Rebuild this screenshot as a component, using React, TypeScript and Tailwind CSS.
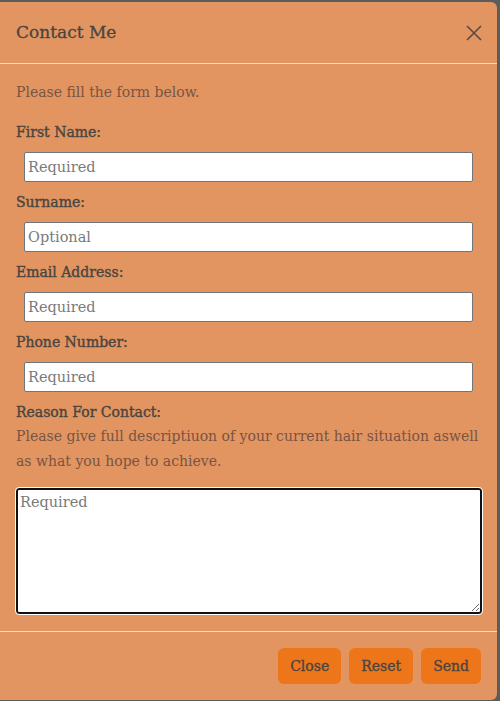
import React from "react";

const fields = [
  { label: "First Name:", placeholder: "Required" },
  { label: "Surname:", placeholder: "Optional" },
  { label: "Email Address:", placeholder: "Required" },
  { label: "Phone Number:", placeholder: "Required" },
];

export default function App() {
  return (
    <div
      className="h-[701px] w-[500px] bg-[#5c5c5c] pt-[2px] pr-[3px] overflow-hidden"
      style={{ fontFamily: '"DejaVu Serif", serif' }}
    >
      <div className="h-[698px] bg-[#e29561] rounded-r-md flex flex-col">
        {/* Header */}
        <div className="flex items-center justify-between px-4 h-[62px] border-b border-[#dee2e6]">
          <h2 className="text-[17px] text-[#4a4440] [-webkit-text-stroke:0.3px_#4a4440]">Contact Me</h2>
          <svg width="16" height="16" viewBox="0 0 16 16" className="mr-[-1px]">
            <path d="M1 1L15 15M15 1L1 15" stroke="#5a4a40" strokeWidth="1.6" />
          </svg>
        </div>

        {/* Body */}
        <div className="flex-1 px-4 pt-4 text-[14px] leading-6">
          <p className="text-[#785443] mb-4">Please fill the form below.</p>
          {fields.map((f) => (
            <div key={f.label}>
              <label className="block text-[#4b4540] [-webkit-text-stroke:0.4px_#4b4540] mb-2">{f.label}</label>
              <input
                className="block mx-2 mb-2 w-[449px] h-[30px] bg-white border border-[#6d757d] rounded-[2px] px-[3px] text-[14.5px] placeholder:text-[#7a7a7a] outline-none"
                placeholder={f.placeholder}
              />
            </div>
          ))}
          <label className="block text-[#4b4540] [-webkit-text-stroke:0.4px_#4b4540]">Reason For Contact:</label>
          <p className="text-[#785443] leading-[25px]">
            Please give full descriptiuon of your current hair situation aswell as what you hope to achieve.
          </p>
          <textarea
            className="block mt-[14px] w-[466px] h-[126px] bg-white border-2 border-[#111] rounded-[3px] outline outline-1 outline-white px-[2px] py-0 text-[14.5px] placeholder:text-[#7a7a7a] resize-y"
            placeholder="Required"
          />
        </div>

        {/* Footer */}
        <div className="mt-4 border-t border-[#f1ddd0] flex justify-end gap-2 px-4 pt-4 pb-4">
          {["Close", "Reset", "Send"].map((b) => (
            <button
              key={b}
              className="h-9 px-[12px] rounded-md bg-[#ec7619] text-[#4a4440] text-[14px] [-webkit-text-stroke:0.3px_#4a4440]"
            >
              {b}
            </button>
          ))}
        </div>
      </div>
    </div>
  );
}
